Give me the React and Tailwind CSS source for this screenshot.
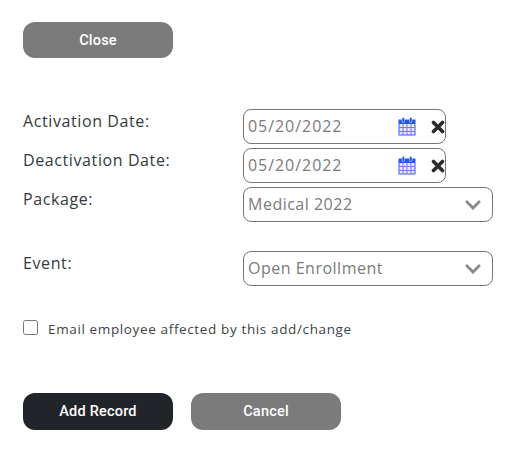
import { FaChevronDown } from "react-icons/fa";

function CalendarIcon() {
  return (
    <svg width="18" height="19" viewBox="0 0 18 19" className="shrink-0 -mt-[1px] ml-[1px]">
      <rect x="1" y="3" width="16" height="15" fill="#e8e4fc" stroke="#2f5ff0" strokeWidth="1" />
      <rect x="1" y="3" width="16" height="4" fill="#1f56f2" />
      <rect x="4" y="0.5" width="2.5" height="5" rx="1" fill="#1f56f2" stroke="#fff" strokeWidth="0.5" />
      <rect x="11.5" y="0.5" width="2.5" height="5" rx="1" fill="#1f56f2" stroke="#fff" strokeWidth="0.5" />
      <path d="M1 10.5h16M1 14.5h16M5 7v11M9 7v11M13 7v11" stroke="#7a78f0" strokeWidth="1" fill="none" />
    </svg>
  );
}

function ClearIcon() {
  return (
    <svg width="14" height="14" viewBox="0 0 14 14" className="shrink-0 ml-[15px]">
      <path d="M2.5 2.5L11.5 11.5M11.5 2.5L2.5 11.5" stroke="#2b2b2b" strokeWidth="3.6" strokeLinecap="round" fill="none" />
    </svg>
  );
}

function DateField({ value }) {
  return (
    <div className="w-[203px] h-[35px] border border-[#767676] rounded-[8px] flex items-center pl-[4px] bg-white">
      <span className="flex-1 -mt-[2px] text-[#7b7b7b] text-[16px] tracking-[0.95px]">{value}</span>
      <CalendarIcon />
      <ClearIcon />
    </div>
  );
}

function SelectField({ value }) {
  return (
    <div className="w-[250px] h-[35px] border border-[#767676] rounded-[8px] flex items-center pl-[4px] pr-[10px] bg-white">
      <span className="flex-1 -mt-[2px] text-[#7b7b7b] text-[16px] tracking-[0.5px]">{value}</span>
      <FaChevronDown className="text-[18px] text-[#8a8a8a]" />
    </div>
  );
}

function Label({ children }) {
  return <div className="w-[220px] text-[16px] text-[#333b40] tracking-[0.6px] leading-[24px]">{children}</div>;
}

export default function App() {
  return (
    <div className="w-[530px] h-[450px] bg-white pl-[23px] pt-[22px] font-['Open_Sans',sans-serif]">
      <button className="w-[150px] h-[36px] pt-[1px] rounded-[12px] bg-[#7b7b7b] text-white text-[14.5px] tracking-[0.2px] font-medium font-['Roboto',sans-serif]">
        Close
      </button>

      <div className="mt-[51px] flex flex-col gap-[4px]">
        <div className="flex">
          <Label>Activation Date:</Label>
          <DateField value="05/20/2022" />
        </div>
        <div className="flex">
          <Label>Deactivation Date:</Label>
          <DateField value="05/20/2022" />
        </div>
        <div className="flex">
          <Label>Package:</Label>
          <SelectField value="Medical 2022" />
        </div>
        <div className="flex mt-[25px]">
          <Label>Event:</Label>
          <SelectField value="Open Enrollment" />
        </div>
      </div>

      <label className="mt-[33px] flex items-center h-[16px]">
        <input type="checkbox" className="w-[15px] h-[15px] accent-white" />
        <span className="ml-[10px] mt-[4px] text-[13.5px] text-[#3d4347] tracking-[0.63px]">
          Email employee affected by this add/change
        </span>
      </label>

      <div className="mt-[58px] flex gap-[18px] font-['Roboto',sans-serif]">
        <button className="w-[150px] h-[37px] pt-[1px] rounded-[12px] bg-[#212529] text-white text-[14.5px] tracking-[0.2px] font-medium">
          Add Record
        </button>
        <button className="w-[150px] h-[37px] pt-[1px] rounded-[12px] bg-[#7b7b7b] text-white text-[14.5px] tracking-[0.2px] font-medium">
          Cancel
        </button>
      </div>
    </div>
  );
}
